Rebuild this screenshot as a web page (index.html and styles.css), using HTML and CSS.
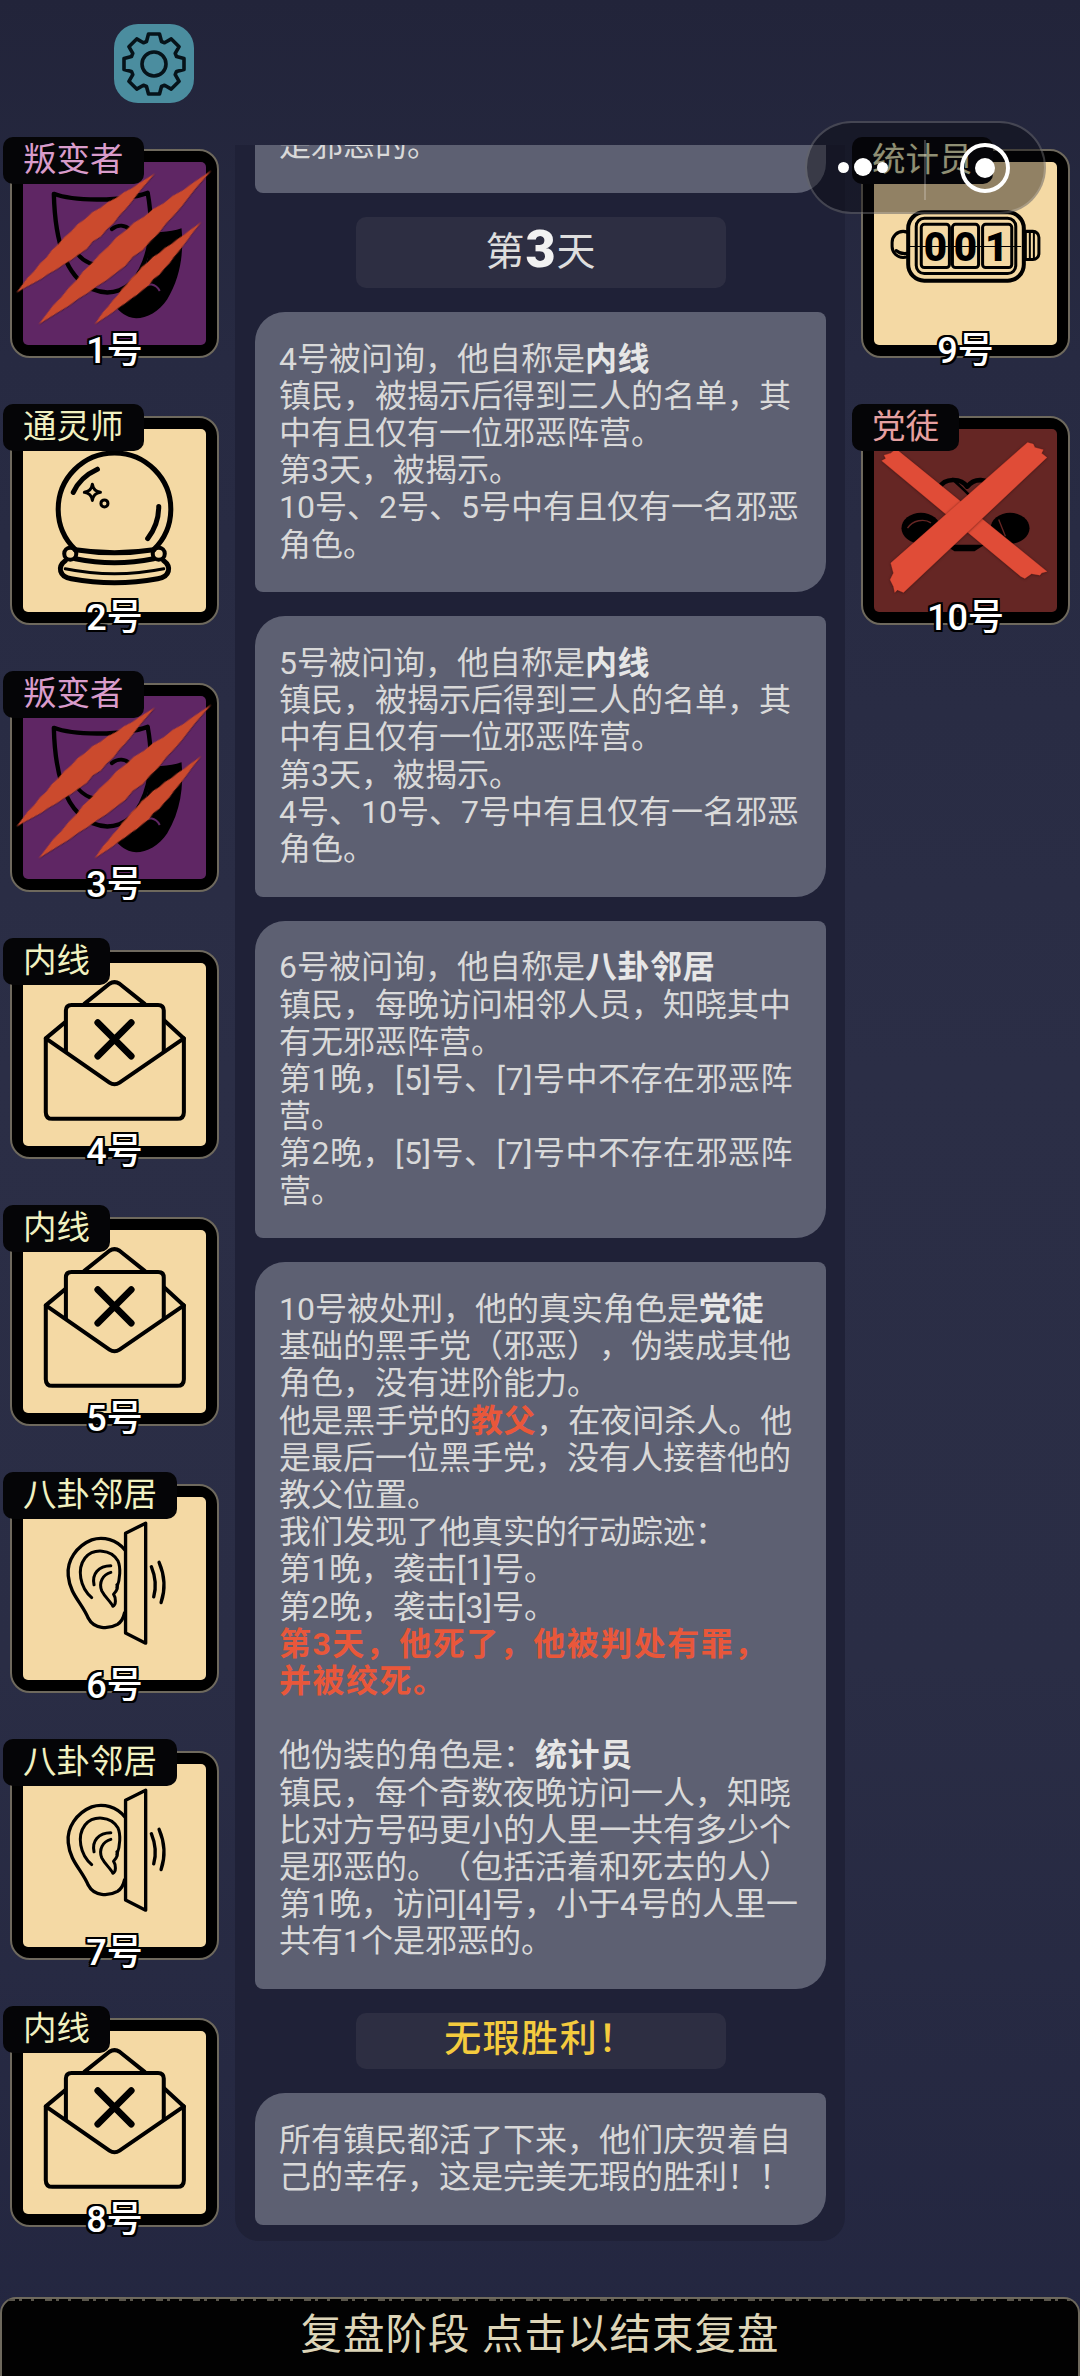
FILE: index.html
```html
<!DOCTYPE html>
<html lang="zh">
<head>
<meta charset="utf-8">
<title>复盘阶段</title>
<link rel="stylesheet" href="styles.css">
</head>
<body>
<svg class="defs" width="0" height="0" aria-hidden="true">
  <defs>
    <polygon id="slash" points="0,0 40,-7 70,-12 105,-14 140,-20 172,-21 205,-27 240,-28 275,-32 310,-32 345,-36 380,-33 415,-34 450,-28 485,-27 520,-20 555,-18 590,-11 620,-9 692,0 620,8 590,13 555,19 520,23 485,26 450,32 415,33 380,37 345,33 310,38 275,35 240,33 205,28 172,25 140,20 105,17 70,11 40,6"/>
    <g id="i-mask">
      <path class="blk-fill" d="M378 205 C410 212 445 208 473 198 C480 270 470 345 430 410 C400 455 350 475 315 462 C295 452 280 440 268 420 C325 400 365 340 375 270 Z"/>
      <path class="blk-line w13" d="M92 95 C150 118 300 118 372 92 C386 170 388 250 352 320 C320 385 260 402 208 380 C140 350 96 260 92 95 Z"/>
      <path class="blk-line w12" d="M160 270 C180 300 215 312 245 305"/>
      <path class="blk-line w12" d="M265 200 C285 185 305 188 320 202"/>
      <path class="purple-line" d="M355 375 C375 360 395 362 408 385"/>
      <use href="#slash" class="claw" transform="translate(-20 390) rotate(-40.7) scale(.79 1)"/>
      <use href="#slash" class="claw" transform="translate(46 485) rotate(-41.7) scale(1 1.1)"/>
      <use href="#slash" class="claw" transform="translate(213 485) rotate(-43.8) scale(.64 .72)"/>
    </g>
    <g id="i-envelope">
      <path class="beige-fill" d="M183 122 L273 55 L363 122 Z"/>
      <path class="blk-line w12" d="M183 122 L258 62 Q273 52 288 62 L363 122"/>
      <path class="blk-line w12" d="M68 225 L128 175 M420 170 L480 225"/>
      <path class="blk-line w12 beige-fill" d="M128 282 L128 142 Q128 125 145 125 L403 125 Q420 125 420 142 L420 282"/>
      <path class="blk-line w12 beige-fill" d="M68 225 L258 357 Q273 367 288 357 L480 225 L480 445 Q480 465 460 465 L88 465 Q68 465 68 445 Z"/>
      <path class="blk-line w20" d="M223 178 L323 278 M323 178 L223 278"/>
    </g>
    <g id="i-ear">
      <path class="blk-line w10" d="M306 108 L366 78 L366 436 L306 406 Z"/>
      <path class="blk-line w10" d="M304 158 C280 128 240 116 205 128 C160 146 130 190 135 235 C140 290 175 315 195 362 C212 395 255 395 282 380 C295 372 300 360 303 346"/>
      <path class="blk-line w9" d="M205 300 C170 270 160 215 185 182 C210 152 262 155 283 190 C292 210 290 245 280 270"/>
      <path class="blk-line w9" d="M212 262 C205 230 225 205 262 205 M262 225 C238 232 225 255 235 280 C245 300 262 312 268 326 C278 322 278 302 270 290 C282 278 285 270 280 262"/>
      <path class="blk-line w10" d="M383 208 Q402 255 390 298"/>
      <path class="blk-line w10" d="M406 195 Q432 255 412 315"/>
    </g>
  </defs>
</svg>

<header class="top">
  <button class="gear" type="button" aria-label="设置">
    <svg viewBox="-33 -33 66 66" class="gear-svg">
      <polygon class="gear-shape" points="-7.5,-22.5 -5.5,-30 5.5,-30 7.5,-22.5 10.6,-21.2 17.3,-25.1 25.1,-17.3 21.2,-10.6 22.5,-7.5 30,-5.5 30,5.5 22.5,7.5 21.2,10.6 25.1,17.3 17.3,25.1 10.6,21.2 7.5,22.5 5.5,30 -5.5,30 -7.5,22.5 -10.6,21.2 -17.3,25.1 -25.1,17.3 -21.2,10.6 -22.5,7.5 -30,5.5 -30,-5.5 -22.5,-7.5 -21.2,-10.6 -25.1,-17.3 -17.3,-25.1 -10.6,-21.2"/>
      <circle class="gear-shape" r="12"/>
    </svg>
  </button>
</header>

<main class="main">
  <section class="col col-left">
    <article class="card">
      <span class="label evil">叛变者</span>
      <div class="art purple"><svg class="icon" viewBox="0 0 546 546"><use href="#i-mask"/></svg></div>
      <span class="num">1号</span>
    </article>
    <article class="card">
      <span class="label town">通灵师</span>
      <div class="art beige">
        <svg class="icon" viewBox="0 0 182 182">
          <path class="blk-line w5" d="M52 120 A56 56 0 1 1 130 120"/>
          <path class="blk-line w5" d="M50 63 C55 52 63 45 74 40"/>
          <path class="blk-line w5" d="M135 77 C135 90 131 100 124 109"/>
          <path class="blk-line w3" d="M69 55 Q70 62 77 63 Q70 64 69 71 Q68 64 61 63 Q68 62 69 55 Z"/>
          <circle class="blk-line w3" cx="81" cy="74" r="3.5"/>
          <path class="blk-line w5" d="M52 120 Q91 126 130 120"/>
          <circle class="blk-line w4" cx="47" cy="124" r="6"/>
          <circle class="blk-line w4" cx="135" cy="124" r="6"/>
          <path class="blk-line w5" d="M52 129 Q91 137 130 129"/>
          <path class="blk-line w5" d="M42 131 C34 137 36 147 48 149 Q91 157 134 149 C146 147 148 137 140 131"/>
          <path class="blk-line w3" d="M42 139 Q91 149 140 139"/>
        </svg>
      </div>
      <span class="num">2号</span>
    </article>
    <article class="card">
      <span class="label evil">叛变者</span>
      <div class="art purple"><svg class="icon" viewBox="0 0 546 546"><use href="#i-mask"/></svg></div>
      <span class="num">3号</span>
    </article>
    <article class="card">
      <span class="label town">内线</span>
      <div class="art beige"><svg class="icon" viewBox="0 0 546 546"><use href="#i-envelope"/></svg></div>
      <span class="num">4号</span>
    </article>
    <article class="card">
      <span class="label town">内线</span>
      <div class="art beige"><svg class="icon" viewBox="0 0 546 546"><use href="#i-envelope"/></svg></div>
      <span class="num">5号</span>
    </article>
    <article class="card">
      <span class="label town">八卦邻居</span>
      <div class="art beige"><svg class="icon" viewBox="0 0 546 546"><use href="#i-ear"/></svg></div>
      <span class="num">6号</span>
    </article>
    <article class="card">
      <span class="label town">八卦邻居</span>
      <div class="art beige"><svg class="icon" viewBox="0 0 546 546"><use href="#i-ear"/></svg></div>
      <span class="num">7号</span>
    </article>
    <article class="card">
      <span class="label town">内线</span>
      <div class="art beige"><svg class="icon" viewBox="0 0 546 546"><use href="#i-envelope"/></svg></div>
      <span class="num">8号</span>
    </article>
  </section>

  <section class="panel">
    <div class="msg msg-cut"><p>是邪恶的。</p></div>
    <h2 class="day">第<b>3</b>天</h2>
    <div class="msg"><p>4号被问询，他自称是<b>内线</b><br>镇民，被揭示后得到三人的名单，其<br>中有且仅有一位邪恶阵营。<br>第3天，被揭示。<br>10号、2号、5号中有且仅有一名邪恶<br>角色。</p></div>
    <div class="msg"><p>5号被问询，他自称是<b>内线</b><br>镇民，被揭示后得到三人的名单，其<br>中有且仅有一位邪恶阵营。<br>第3天，被揭示。<br>4号、10号、7号中有且仅有一名邪恶<br>角色。</p></div>
    <div class="msg"><p>6号被问询，他自称是<b>八卦邻居</b><br>镇民，每晚访问相邻人员，知晓其中<br>有无邪恶阵营。<br><span class="loose">第1晚，[5]号、[7]号中不存在邪恶阵</span><br>营。<br><span class="loose">第2晚，[5]号、[7]号中不存在邪恶阵</span><br>营。</p></div>
    <div class="msg"><p>10号被处刑，他的真实角色是<b>党徒</b><br>基础的黑手党（邪恶），伪装成其他<br>角色，没有进阶能力。<br>他是黑手党的<b class="red">教父</b>，在夜间杀人。他<br>是最后一位黑手党，没有人接替他的<br>教父位置。<br>我们发现了他真实的行动踪迹：<br>第1晚，袭击[1]号。<br>第2晚，袭击[3]号。<br><b class="red wide">第3天，他死了，他被判处有罪，<br>并被绞死。</b><br><br>他伪装的角色是：<b>统计员</b><br>镇民，每个奇数夜晚访问一人，知晓<br>比对方号码更小的人里一共有多少个<br>是邪恶的。（包括活着和死去的人）<br>第1晚，访问[4]号，小于4号的人里一<br>共有1个是邪恶的。</p></div>
    <h2 class="day day-win">无瑕胜利！</h2>
    <div class="msg"><p>所有镇民都活了下来，他们庆贺着自<br>己的幸存，这是完美无瑕的胜利！！</p></div>
  </section>

  <section class="col col-right">
    <article class="card">
      <span class="label town">统计员</span>
      <div class="art beige">
        <svg class="icon" viewBox="0 0 182 182">
          <rect class="blk-line beige-fill w3" x="18" y="69" width="22" height="26" rx="11"/>
          <path class="blk-line w3" d="M22 88 Q28 93 36 90"/>
          <rect class="blk-line beige-fill w3" x="145" y="69" width="19" height="28" rx="6"/>
          <path class="blk-line w2" d="M151 70 V96 M155 70 V96 M159 70 V96"/>
          <rect class="blk-line beige-fill w4" x="34" y="50" width="115" height="68" rx="16"/>
          <rect class="blk-line w3" x="42" y="56" width="99" height="55" rx="8"/>
          <rect class="blk-line w3" x="47" y="62" width="28" height="43" rx="3"/>
          <rect class="blk-line w3" x="78" y="62" width="26" height="43" rx="3"/>
          <rect class="blk-line w3" x="108" y="62" width="29" height="43" rx="3"/>
          <text class="digits" x="61" y="98">0</text>
          <text class="digits" x="91" y="98">0</text>
          <text class="digits" x="122" y="98">1</text>
          <path class="blk-line w1" d="M36 84 H146"/>
        </svg>
      </div>
      <span class="num">9号</span>
    </article>
    <article class="card">
      <span class="label foe">党徒</span>
      <div class="art maroon">
        <svg class="icon" viewBox="0 0 546 546">
          <path class="blk-line w14" d="M195 175 C210 145 260 145 278 172 C300 145 340 145 352 178"/>
          <path class="blk-line w8" d="M235 150 C260 175 280 190 300 215"/>
          <ellipse class="blk-fill" cx="140" cy="296" rx="58" ry="46"/>
          <ellipse class="blk-fill" cx="406" cy="296" rx="58" ry="46"/>
          <path class="maroon-line" d="M100 296 C115 272 150 266 170 280"/>
          <path class="maroon-line" d="M372 270 L392 320"/>
          <path class="blk-fill" d="M210 345 H330 L300 365 H240 Z"/>
          <polygon class="tape" points="23,95 35,88 30,78 50,72 66,60 516,425 500,430 495,436 470,432 450,446 438,440"/>
          <polygon class="tape" points="50,400 458,40 475,45 480,55 505,62 500,72 516,85 88,488 70,480 62,488 58,470 48,450 58,430"/>
        </svg>
      </div>
      <span class="num">10号</span>
    </article>
  </section>
</main>

<footer class="bar"><span>复盘阶段 点击以结束复盘</span></footer>

<div class="capsule">
  <div class="dots"><i class="dot"></i><i class="dot dot-big"></i><i class="dot"></i></div>
  <i class="divider"></i>
  <div class="target"><i></i></div>
</div>
</body>
</html>
```
FILE: styles.css
```css
* { box-sizing: border-box; }

html, body { margin: 0; padding: 0; }

body {
  position: relative;
  width: 1080px;
  height: 2376px;
  overflow: hidden;
  display: flex;
  flex-direction: column;
  font-family: Roboto, "Noto Sans CJK SC", sans-serif;
  text-spacing-trim: space-all;
  background: linear-gradient(180deg, #22243a 0%, #272a42 15%, #2b2e46 45%, #2a2d45 70%, #232640 100%);
  color: #dedede;
}

.defs { position: absolute; }

.top {
  height: 145px;
  padding: 24px 0 0 114px;
  flex: none;
}

.gear {
  display: flex;
  align-items: center;
  justify-content: center;
  width: 80px;
  height: 79px;
  padding: 0;
  border: 0;
  border-radius: 24px;
  background: #4b8d9f;
}

.gear-svg { width: 66px; height: 66px; }

.gear-shape {
  fill: none;
  stroke: #06131a;
  stroke-width: 3.6;
  stroke-linejoin: round;
}

.main {
  display: flex;
  align-items: flex-start;
  flex: none;
}

.col {
  display: flex;
  flex-direction: column;
  gap: 58px;
  padding-top: 4px;
}

.col-left { width: 235px; padding-left: 10px; }
.col-right { padding-left: 16px; }

.card {
  position: relative;
  width: 209px;
  height: 209px;
  padding: 11px;
  border: 2px solid #6e695d;
  border-radius: 20px;
  background: #000;
}

.art {
  width: 183px;
  height: 183px;
  border-radius: 5px;
}

.beige { background: #f4d9a4; }
.purple { background: #5f2664; }
.maroon { background: #652624; }

.icon { display: block; width: 100%; height: 100%; overflow: visible; }

.label {
  position: absolute;
  z-index: 2;
  left: -9px;
  top: -14px;
  padding: 0 20px;
  height: 47px;
  line-height: 45px;
  font-size: 33.5px;
  white-space: nowrap;
  border-radius: 10px;
  background: #050507;
}

.col-right .label { left: -11px; }

.evil { color: #d99ccb; }
.town { color: #f1f1c0; }
.foe { color: #e6a0a0; }

.num {
  position: absolute;
  z-index: 2;
  left: 0;
  right: 0;
  bottom: -15px;
  text-align: center;
  font-size: 36px;
  line-height: 40px;
  font-weight: 500;
  color: #fff;
  text-shadow: 2px 0 0 #000, -2px 0 0 #000, 0 2px 0 #000, 0 -2px 0 #000, 2px 2px 0 #000, -2px 2px 0 #000, 2px -2px 0 #000, -2px -2px 0 #000;
}

.blk-line {
  fill: none;
  stroke: #000;
  stroke-linecap: round;
  stroke-linejoin: round;
}

.blk-fill { fill: #000; }
.beige-fill { fill: #f4d9a4; }
.w1 { stroke-width: 1; }
.w2 { stroke-width: 2; }
.w3 { stroke-width: 3; }
.w4 { stroke-width: 4; }
.w5 { stroke-width: 5; }
.w8 { stroke-width: 8; }
.w9 { stroke-width: 9; }
.w10 { stroke-width: 10; }
.w12 { stroke-width: 12; }
.w13 { stroke-width: 13; }
.w14 { stroke-width: 14; }
.w20 { stroke-width: 20; }

.claw {
  fill: #cb4a2d;
  filter: drop-shadow(0 2px 2px rgba(40, 10, 20, .5));
}

.tape {
  fill: #e04c37;
  stroke: #e04c37;
  stroke-width: 1;
  filter: drop-shadow(0 1px 3px rgba(30, 5, 5, .6));
}

.maroon-line {
  fill: none;
  stroke: #652624;
  stroke-width: 4;
}

.purple-line {
  fill: none;
  stroke: #5f2664;
  stroke-width: 6;
}

.digits {
  font-family: Roboto, sans-serif;
  font-size: 40px;
  font-weight: 900;
  text-anchor: middle;
  fill: #000;
}

.panel {
  display: flex;
  flex-direction: column;
  gap: 24px;
  width: 610px;
  padding: 0 19px 16px 20px;
  border-radius: 0 0 24px 24px;
  background: #1f2137;
}

.msg {
  padding: 28.6px 24px;
  border-radius: 30px 8px 30px 8px;
  background: #5d6072;
  font-size: 32px;
  line-height: 37.2px;
  color: #d9d9d9;
  white-space: nowrap;
}

.msg p { margin: 0; }
.msg b { font-weight: 700; letter-spacing: .6px; color: #e6e6e6; }
.msg b.red { color: #e9573a; }
.msg b.wide { letter-spacing: 1.5px; }
.loose { letter-spacing: .5px; }

.msg-cut {
  display: flex;
  flex-direction: column;
  justify-content: flex-end;
  height: 48px;
  padding-top: 0;
  overflow: hidden;
  border-radius: 0 0 30px 8px;
}

.day {
  width: 370px;
  height: 71px;
  margin: 0 auto;
  border-radius: 10px;
  background: #2d2e42;
  font-size: 39px;
  line-height: 71px;
  font-weight: 400;
  text-align: center;
  color: #dedede;
}

.day b {
  padding: 0 1px;
  font-size: 52px;
  font-weight: 900;
  color: #f2f2f2;
  vertical-align: -2px;
  line-height: 1;
}

.day-win {
  height: 56px;
  line-height: 54px;
  font-size: 37px;
  font-weight: 500;
  letter-spacing: 1.5px;
  color: #f4cb3e;
}

.bar {
  margin-top: auto;
  height: 79px;
  position: relative;
  padding-top: 8px;
  border: 2px solid #6e695d;
  border-bottom: 0;
  border-radius: 16px 16px 0 0;
  background: #020202;
  text-align: center;
  font-size: 41.5px;
  line-height: 56px;
  letter-spacing: 1px;
  color: #ddd5b8;
}

.bar::before {
  content: "";
  position: absolute;
  left: 6px;
  right: 6px;
  top: 0;
  height: 2px;
  background: repeating-linear-gradient(90deg, #5a564c 0 7px, transparent 7px 11px, #5a564c 11px 14px, transparent 14px 23px, #5a564c 23px 26px, transparent 26px 37px);
}

.capsule {
  position: absolute;
  z-index: 5;
  left: 805px;
  top: 121px;
  width: 241px;
  height: 93px;
  border-radius: 47px;
  border: 2px solid rgba(255, 255, 255, .2);
  background: rgba(8, 8, 12, .42);
}

.dots {
  position: absolute;
  left: 31px;
  top: 35px;
  display: flex;
  align-items: center;
  gap: 5px;
}

.dot {
  width: 11px;
  height: 11px;
  border-radius: 50%;
  background: #fff;
}

.dot-big { width: 18px; height: 18px; }

.divider {
  position: absolute;
  left: 117px;
  top: 17px;
  width: 2px;
  height: 60px;
  background: rgba(255, 255, 255, .22);
}

.target {
  position: absolute;
  left: 153px;
  top: 20px;
  width: 50px;
  height: 50px;
  display: flex;
  align-items: center;
  justify-content: center;
  border: 4px solid #fff;
  border-radius: 50%;
}

.target i {
  width: 20px;
  height: 20px;
  border-radius: 50%;
  background: #fff;
}
```
